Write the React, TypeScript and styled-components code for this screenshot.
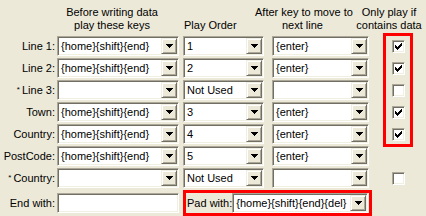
import React from 'react';
import styled, { createGlobalStyle, css } from 'styled-components';

const GlobalStyle = createGlobalStyle`
  html, body {
    margin: 0;
    padding: 0;
    background: #ece9d8;
  }
  body {
    font-family: "Liberation Sans", Arial, sans-serif;
    font-size: 11px;
    color: #000;
  }
`;

const ROWS = [
  { label: 'Line 1:', before: '{home}{shift}{end}', order: '1', after: '{enter}', checked: true },
  { label: 'Line 2:', before: '{home}{shift}{end}', order: '2', after: '{enter}', checked: true },
  { label: 'Line 3:', star: true, before: '', order: 'Not Used', after: '', checked: false },
  { label: 'Town:', before: '{home}{shift}{end}', order: '3', after: '{enter}', checked: true },
  { label: 'Country:', before: '{home}{shift}{end}', order: '4', after: '{enter}', checked: true },
];

const sunken = css`
  box-sizing: border-box;
  border: 1px solid;
  border-color: #aca899 #fff #fff #aca899;
  box-shadow: inset 1px 1px 0 #716f64, inset -1px -1px 0 #f1efe2;
  padding: 1px;
  background: #fff;
`;

const Form = styled.div`
  display: grid;
  grid-template-columns: 57px 126px 89px 97px 1fr;
  grid-template-rows: 34px repeat(7, 20px) 26px;
  row-gap: 2px;
  width: 426px;
  height: 216px;
  overflow: hidden;
`;

const Heading = styled.div<{ $col: number }>`
  grid-row: 1;
  grid-column: ${p => p.$col};
  align-self: end;
  margin-bottom: 2px;
  line-height: 13px;
  white-space: nowrap;
`;

const BeforeHeading = styled(Heading)`
  justify-self: start;
  width: 110px;
  text-align: center;
`;

const OrderHeading = styled(Heading)`
  padding-left: 1px;
`;

const AfterHeading = styled(Heading)`
  justify-self: start;
  margin-left: -17px;
  width: 95px;
  text-align: center;
`;

const OnlyHeading = styled(Heading)`
  justify-self: start;
  margin-left: -15px;
  width: 70px;
  text-align: center;
`;

const Label = styled.div`
  grid-column: 1;
  align-self: center;
  text-align: right;
  padding-right: 2px;
  white-space: nowrap;
`;

const Star = styled.span`
  font-size: 8px;
  vertical-align: 2px;
  margin-right: 2px;
`;

const Combo = styled.div<{ $width: number }>`
  ${sunken};
  width: ${p => p.$width}px;
  height: 20px;
  display: flex;
  align-items: stretch;
  align-self: center;
`;

const ComboText = styled.div`
  flex: 1;
  padding-left: 2px;
  line-height: 16px;
  white-space: nowrap;
  overflow: hidden;
`;

const DropButton = styled.div`
  box-sizing: border-box;
  width: 16px;
  height: 16px;
  background: #ece9d8;
  border: 1px solid;
  border-color: #f1efe2 #716f64 #716f64 #f1efe2;
  box-shadow: inset 1px 1px 0 #fff, inset -1px -1px 0 #aca899;
  display: flex;
  align-items: center;
  justify-content: center;
`;

const TextBox = styled.div`
  ${sunken};
  grid-column: 2;
  width: 122px;
  height: 20px;
  align-self: center;
`;

const CheckGroup = styled.div`
  grid-column: 5;
  grid-row: 2 / span 5;
  box-sizing: border-box;
  width: 30px;
  margin: -3px 0 -3px 14px;
  border: 3px solid #ff0000;
  display: grid;
  grid-template-rows: repeat(5, 20px);
  row-gap: 2px;
  justify-items: center;
  align-items: center;
`;

const CheckCell = styled.div`
  grid-column: 5;
  width: 24px;
  margin-left: 17px;
  display: flex;
  align-items: center;
  justify-content: center;
`;

const Box = styled.div`
  ${sunken};
  width: 13px;
  height: 13px;
  padding: 2px;
  display: flex;
`;

const PadBox = styled.div`
  grid-column: 3 / span 2;
  box-sizing: border-box;
  width: 189px;
  height: 26px;
  border: 3px solid #ff0000;
  display: flex;
  align-items: center;
  justify-content: space-between;
  padding-right: 1px;
`;

const PadLabel = styled.div`
  padding-left: 1px;
  white-space: nowrap;
`;

const Arrow = () => (
  <svg width="7" height="4" viewBox="0 0 7 4" shapeRendering="crispEdges">
    <rect x="0" y="0" width="7" height="1" fill="#000" />
    <rect x="1" y="1" width="5" height="1" fill="#000" />
    <rect x="2" y="2" width="3" height="1" fill="#000" />
    <rect x="3" y="3" width="1" height="1" fill="#000" />
  </svg>
);

const Tick = () => (
  <svg width="7" height="7" viewBox="0 0 7 7" shapeRendering="crispEdges">
    {[2, 3, 4, 3, 2, 1, 0].map((y, x) => (
      <rect key={x} x={x} y={y} width="1" height="3" fill="#000" />
    ))}
  </svg>
);

const Check = ({ checked }: { checked: boolean }) => <Box>{checked && <Tick />}</Box>;

const Select = ({ value, width, col }: { value: string; width: number; col: number }) => (
  <Combo $width={width} style={{ gridColumn: col }}>
    <ComboText>{value}</ComboText>
    <DropButton>
      <Arrow />
    </DropButton>
  </Combo>
);

const App = () => {
  const extra = [
    { label: 'PostCode:', before: '{home}{shift}{end}', order: '5', after: '{enter}' },
    { label: 'Country:', star: true, before: '', order: 'Not Used', after: '' },
  ];

  return (
    <>
      <GlobalStyle />
      <Form>
        <BeforeHeading $col={2}>Before writing data<br />play these keys</BeforeHeading>
        <OrderHeading $col={3}>Play Order</OrderHeading>
        <AfterHeading $col={4}>After key to move to<br />next line</AfterHeading>
        <OnlyHeading $col={5}>Only play if<br />contains data</OnlyHeading>

        {[...ROWS, ...extra].map((r, i) => (
          <React.Fragment key={i}>
            <Label style={{ gridRow: i + 2 }}>
              {r.star && <Star>*</Star>}
              {r.label}
            </Label>
            <Select value={r.before} width={122} col={2} />
            <Select value={r.order} width={81} col={3} />
            <Select value={r.after} width={97} col={4} />
          </React.Fragment>
        ))}

        <CheckGroup>
          {ROWS.map((r, i) => (
            <Check key={i} checked={r.checked} />
          ))}
        </CheckGroup>

        <CheckCell style={{ gridRow: 8 }}>
          <Check checked={false} />
        </CheckCell>

        <Label style={{ gridRow: 9 }}>End with:</Label>
        <TextBox style={{ gridRow: 9 }} />
        <PadBox style={{ gridRow: 9 }}>
          <PadLabel>Pad with:</PadLabel>
          <Combo $width={137}>
            <ComboText>{'{home}{shift}{end}{del}'}</ComboText>
            <DropButton>
              <Arrow />
            </DropButton>
          </Combo>
        </PadBox>
      </Form>
    </>
  );
};

export default App;
